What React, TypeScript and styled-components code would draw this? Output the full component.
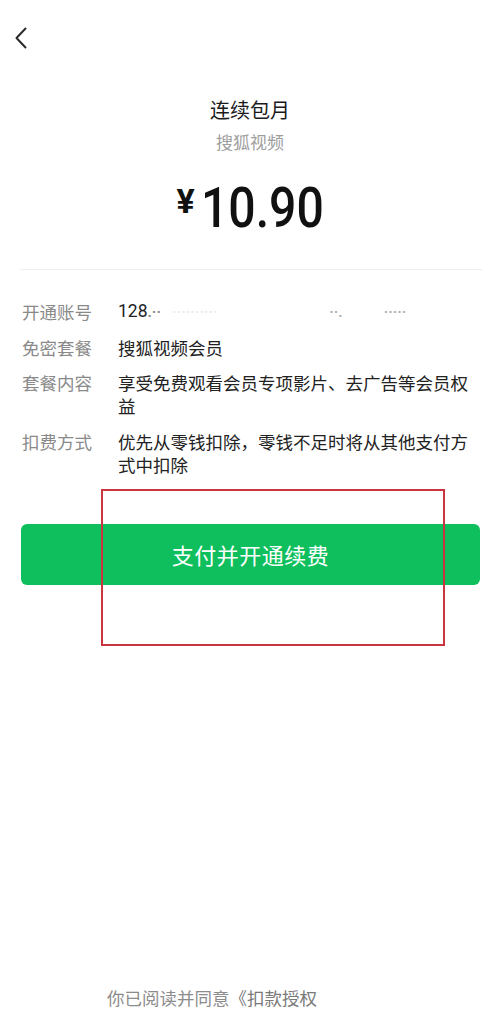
import React from "react";
import styled, { createGlobalStyle } from "styled-components";

const GlobalStyle = createGlobalStyle`
  html, body {
    margin: 0;
    padding: 0;
    background: #ffffff;
  }
  body {
    font-family: "Noto Sans CJK SC", "Noto Sans", sans-serif;
    -webkit-font-smoothing: antialiased;
  }
`;

interface InfoItem {
  label: string;
  value: React.ReactNode;
  nowrap?: boolean;
}

const App: React.FC = () => {
  // account number is blurred in the source, keep it faint
  const infoList: InfoItem[] = [
    {
      label: "开通账号",
      nowrap: true,
      value: (
        <>
          128<Masked $tone="dark">.··</Masked>
          <Masked $tone="faint">{"   ··········"}</Masked>
          <Masked $tone="mid">{"                              ··.           ·····"}</Masked>
        </>
      ),
    },
    { label: "免密套餐", value: "搜狐视频会员" },
    { label: "套餐内容", value: "享受免费观看会员专项影片、去广告等会员权益" },
    { label: "扣费方式", value: "优先从零钱扣除，零钱不足时将从其他支付方式中扣除" },
  ];

  return (
    <Page>
      <GlobalStyle />
      <NavBar>
        <BackButton aria-label="返回">
          <svg width="14" height="22" viewBox="0 0 14 22" fill="none">
            <path
              d="M11.5 1.5 L2.5 11 L11.5 20.5"
              stroke="#2b2b2b"
              strokeWidth="2"
              strokeLinecap="round"
              strokeLinejoin="round"
            />
          </svg>
        </BackButton>
      </NavBar>

      <Title>连续包月</Title>
      <SubTitle>搜狐视频</SubTitle>
      <PriceRow>
        <Yen>¥</Yen>
        <Amount>10.90</Amount>
      </PriceRow>

      <Divider />

      <InfoGrid>
        {infoList.map((item) => (
          <React.Fragment key={item.label}>
            <Label>{item.label}</Label>
            <Value $nowrap={item.nowrap}>{item.value}</Value>
          </React.Fragment>
        ))}
      </InfoGrid>

      <PayButton>支付并开通续费</PayButton>

      {/* red marker box drawn over the screenshot */}
      <Highlight />

      <Footer>
        你已阅读并同意<Agreement>《扣款授权</Agreement>
      </Footer>
    </Page>
  );
};

const Page = styled.div`
  position: relative;
  display: flex;
  flex-direction: column;
  width: 500px;
  height: 1015px;
  overflow: hidden;
  background: #ffffff;
`;

const NavBar = styled.div`
  display: flex;
  align-items: center;
  height: 76px;
  padding-left: 14px;
`;

const BackButton = styled.div`
  display: flex;
  align-items: center;
  width: 20px;
  height: 24px;
`;

const Title = styled.div`
  margin-top: 20px;
  text-align: center;
  font-size: 20px;
  line-height: 28px;
  color: #1b1b1b;
`;

const SubTitle = styled.div`
  margin-top: 6px;
  text-align: center;
  font-size: 17px;
  line-height: 24px;
  color: #9e9e9e;
`;

const PriceRow = styled.div`
  display: flex;
  justify-content: center;
  align-items: flex-start;
  margin-top: 24px;
  height: 60px;
  color: #111111;
`;

const Yen = styled.span`
  margin-top: 6px;
  margin-right: 6px;
  font-family: Roboto, "Noto Sans", sans-serif;
  font-size: 34px;
  font-weight: 700;
  line-height: 34px;
`;

const Amount = styled.span`
  display: inline-block;
  font-family: Roboto, "Noto Sans", sans-serif;
  font-size: 56px;
  font-weight: 500;
  line-height: 60px;
  transform: scaleX(0.86);
  transform-origin: left center;
  margin-right: -20px;
`;

const Divider = styled.div`
  margin: 31px 18px 0 20px;
  height: 1px;
  background: #efefef;
`;

const InfoGrid = styled.div`
  display: grid;
  grid-template-columns: 96px 1fr;
  row-gap: 12.5px;
  margin-top: 30px;
  padding: 0 20px 0 22px;
  font-size: 17.5px;
  line-height: 23px;
`;

const Label = styled.div`
  color: #8a8a8a;
  white-space: nowrap;
`;

const Value = styled.div<{ $nowrap?: boolean }>`
  color: #222222;
  word-break: break-all;
  white-space: ${(p) => (p.$nowrap ? "pre" : "normal")};
  overflow: hidden;
  height: ${(p) => (p.$nowrap ? "23px" : "auto")};
  font-family: ${(p) =>
    p.$nowrap ? 'Roboto, "Noto Sans CJK SC", sans-serif' : "inherit"};
`;

const toneColors = {
  dark: "#8a8a8a",
  mid: "#b0b0b0",
  faint: "#ececec",
};

const Masked = styled.span<{ $tone: keyof typeof toneColors }>`
  font-family: Roboto, sans-serif;
  color: ${(p) => toneColors[p.$tone]};
  font-size: 15px;
  font-weight: 700;
  line-height: 23px;
`;

const PayButton = styled.div`
  display: flex;
  align-items: center;
  justify-content: center;
  height: 61px;
  margin: 48px 20px 0 21px;
  border-radius: 6px;
  background: #0fbf5e;
  color: #ffffff;
  font-size: 22px;
  letter-spacing: 0.5px;
`;

const Highlight = styled.div`
  position: absolute;
  left: 101px;
  top: 489px;
  width: 340px;
  height: 153px;
  border: 2px solid #c93640;
  pointer-events: none;
`;

const Footer = styled.div`
  margin-top: auto;
  padding: 0 0 5px 107px;
  font-size: 17.5px;
  line-height: 24px;
  color: #8c8c8c;
`;

const Agreement = styled.span`
  color: #7a7a7a;
`;

export default App;
